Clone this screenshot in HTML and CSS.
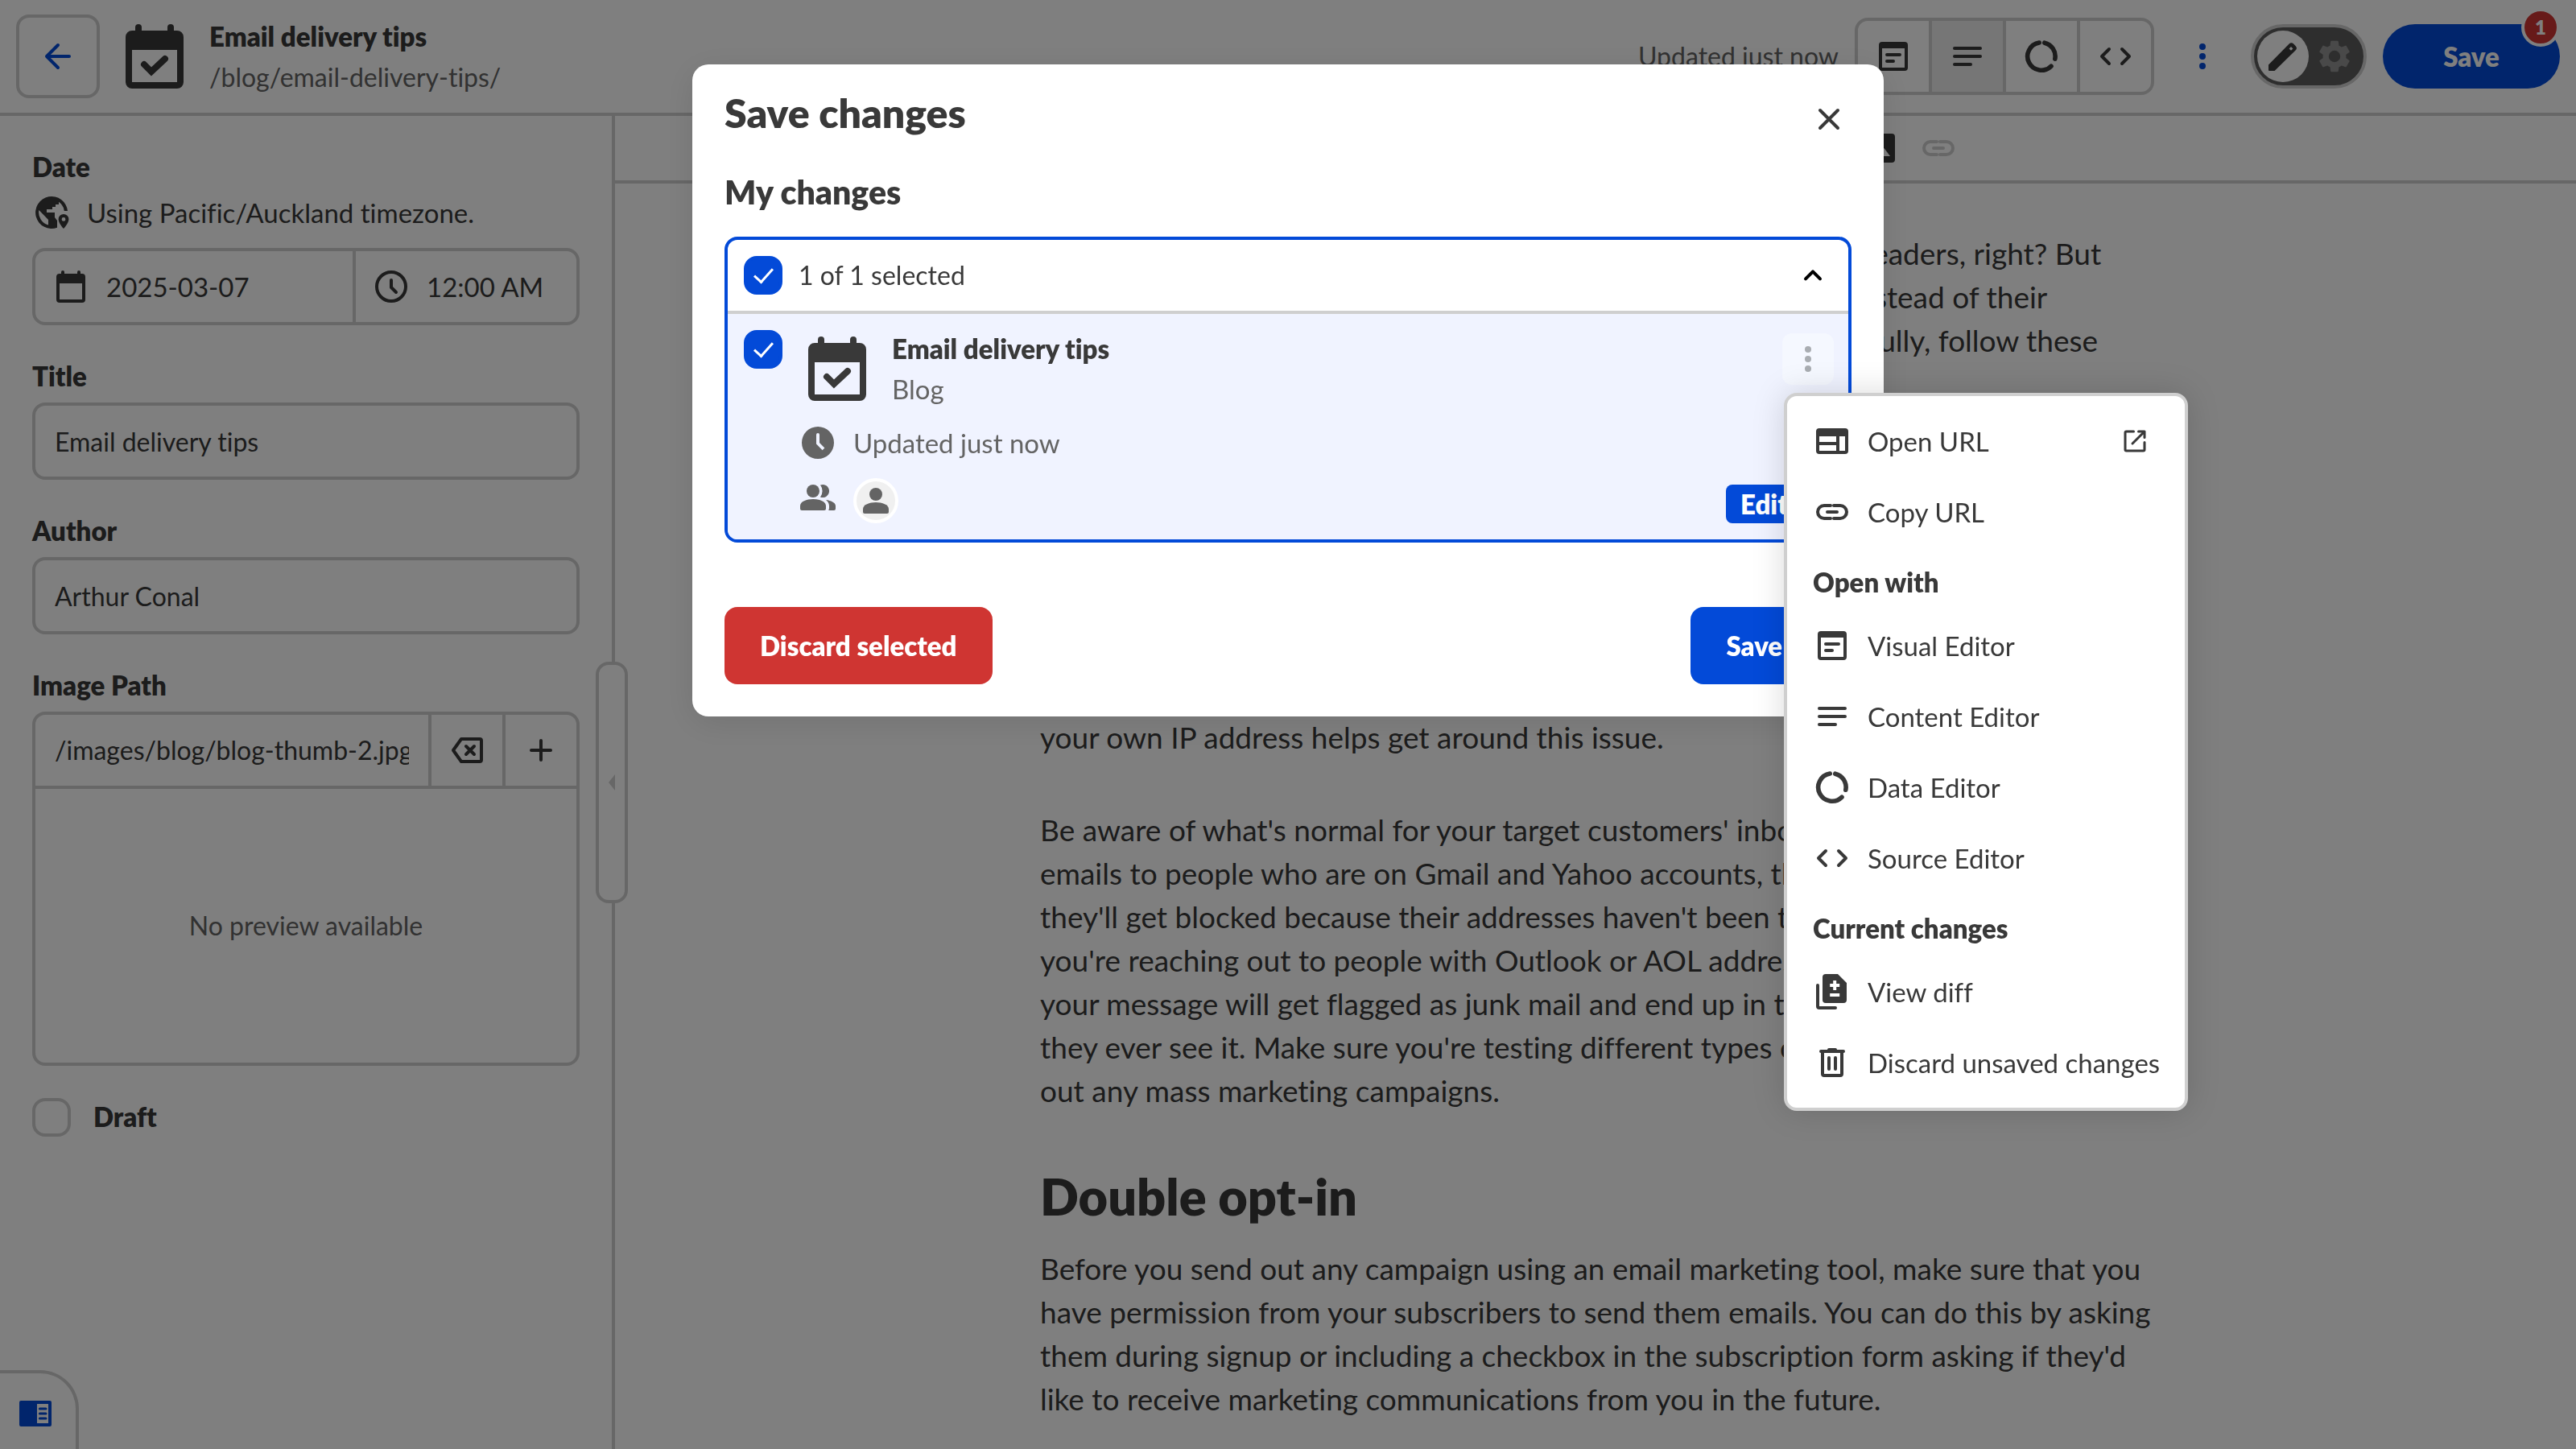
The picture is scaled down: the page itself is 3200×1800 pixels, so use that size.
FILE: index.html
```html
<!DOCTYPE html>
<html lang="en">
<head>
    <meta charset="UTF-8">
    <meta name="viewport" content="width=device-width, initial-scale=1.0">
    <title>Email delivery tips</title>
    <link rel="stylesheet" href="styles.css">
</head>
<body>
    <!-- Shared icons -->
    <svg class="sprite" aria-hidden="true">
        <symbol id="i-post" viewBox="0 0 72 80">
            <rect x="12" width="8" height="16" rx="4"/>
            <rect x="52" width="8" height="16" rx="4"/>
            <path fill-rule="evenodd" d="M8 8h56a8 8 0 0 1 8 8v56a8 8 0 0 1-8 8H8a8 8 0 0 1-8-8V16a8 8 0 0 1 8-8zM8 32v40h56V32z"/>
            <path d="M23 50l9 9 17-16" fill="none" stroke="currentColor" stroke-width="8" stroke-linecap="round" stroke-linejoin="miter"/>
        </symbol>
        <symbol id="i-visual" viewBox="0 0 24 24">
            <path fill-rule="evenodd" d="M5 3h14a2 2 0 0 1 2 2v14a2 2 0 0 1-2 2H5a2 2 0 0 1-2-2V5a2 2 0 0 1 2-2zM5 7v12h14V7z"/>
            <path class="line" d="M8 11h8M8 15h4"/>
        </symbol>
        <symbol id="i-content" viewBox="0 0 24 24"><path class="line" d="M4 7h16M4 12h16M4 17h10"/></symbol>
        <symbol id="i-data" viewBox="0 0 24 24"><path class="line thick" d="M10.6 3.5A8.6 8.6 0 1 0 18 18.1M13.9 3.6A8.6 8.6 0 0 1 20.4 13.6"/></symbol>
        <symbol id="i-code" viewBox="0 0 24 24"><path class="line" d="M8 7.5L3.5 12L8 16.5M16 7.5L20.5 12L16 16.5"/></symbol>
        <symbol id="i-link" viewBox="0 0 24 24"><path class="line" d="M11 16H7a4 4 0 0 1 0-8h4M13 8h4a4 4 0 0 1 0 8h-4M9 12h6"/></symbol>
        <symbol id="i-dots" viewBox="0 0 24 24"><circle cx="12" cy="6" r="2"/><circle cx="12" cy="12" r="2"/><circle cx="12" cy="18" r="2"/></symbol>
    </svg>

    <header class="topbar">
        <button class="back-btn" aria-label="Back">
            <svg class="icon" viewBox="0 0 24 24"><path class="line" d="M19 12H5M12 5l-7 7 7 7"/></svg>
        </button>
        <svg class="post-icon"><use href="#i-post"/></svg>
        <div class="page-name">
            <h1>Email delivery tips</h1>
            <span>/blog/email-delivery-tips/</span>
        </div>
        <span class="updated">Updated just now</span>
        <div class="editor-tabs">
            <button aria-label="Visual Editor"><svg class="icon"><use href="#i-visual"/></svg></button>
            <button class="active" aria-label="Content Editor"><svg class="icon"><use href="#i-content"/></svg></button>
            <button aria-label="Data Editor"><svg class="icon"><use href="#i-data"/></svg></button>
            <button aria-label="Source Editor"><svg class="icon"><use href="#i-code"/></svg></button>
        </div>
        <button class="more-btn" aria-label="More"><svg class="icon"><use href="#i-dots"/></svg></button>
        <button class="mode-toggle" aria-label="Editing mode">
            <span class="knob">
                <svg class="icon" viewBox="0 0 24 24"><path fill-rule="evenodd" d="M3 20.5v-3.2L15.8 4.3a2 2 0 0 1 2.8 0l1.2 1.2a2 2 0 0 1 0 2.8L6.8 21H3.5a.5.5 0 0 1-.5-.5zM17 6L15.8 7.2 17 8.4 18.2 7.2z"/></svg>
            </span>
            <span class="gear">
                <svg class="icon" viewBox="0 0 24 24"><path d="M19.14 12.94c.04-.3.06-.61.06-.94 0-.32-.02-.64-.07-.94l2.03-1.58a.49.49 0 0 0 .12-.61l-1.92-3.32a.488.488 0 0 0-.59-.22l-2.39.96c-.5-.38-1.03-.7-1.62-.94l-.36-2.54a.484.484 0 0 0-.48-.41h-3.84c-.24 0-.43.17-.47.41l-.36 2.54c-.59.24-1.13.57-1.62.94l-2.39-.96c-.22-.08-.47 0-.59.22L2.74 8.87c-.12.21-.08.47.12.61l2.03 1.58c-.05.3-.09.63-.09.94s.02.64.07.94l-2.03 1.58a.49.49 0 0 0-.12.61l1.92 3.32c.12.22.37.29.59.22l2.39-.96c.5.38 1.03.7 1.62.94l.36 2.54c.05.24.24.41.48.41h3.84c.24 0 .44-.17.47-.41l.36-2.54c.59-.24 1.13-.56 1.62-.94l2.39.96c.22.08.47 0 .59-.22l1.92-3.32c.12-.22.07-.47-.12-.61zM12 15.6A3.6 3.6 0 1 1 12 8.4a3.6 3.6 0 0 1 0 7.2z"/></svg>
            </span>
        </button>
        <button class="save-btn">Save<span class="count">1</span></button>
    </header>

    <div class="workspace">
        <aside class="sidebar">
            <div class="field">
                <label for="date">Date</label>
                <p class="timezone">
                    <svg class="icon" viewBox="0 0 24 24">
                        <path fill-rule="evenodd" d="M22 11A10 10 0 1 0 15.5 21.4V17L14 15v-3H9v-2h3.5V8.5h2V7h2V5.4A8 8 0 0 1 19.9 11zM4.2 10.5L10 16.5v3.2A8 8 0 0 1 4.2 10.5z"/>
                        <path fill-rule="evenodd" d="M19.5 13a3.2 3.2 0 0 0-3.2 3.2c0 2.3 3.2 5.8 3.2 5.8s3.2-3.5 3.2-5.8a3.2 3.2 0 0 0-3.2-3.2zM19.5 15a1.2 1.2 0 1 1 0 2.4 1.2 1.2 0 0 1 0-2.4z"/>
                    </svg>
                    Using Pacific/Auckland timezone.
                </p>
                <div class="box date-box">
                    <div class="date-part">
                        <svg class="icon" viewBox="0 0 24 24"><path fill-rule="evenodd" d="M6 3a1 1 0 0 1 2 0v1h8V3a1 1 0 0 1 2 0v1h1a2 2 0 0 1 2 2v14a2 2 0 0 1-2 2H5a2 2 0 0 1-2-2V6a2 2 0 0 1 2-2h1zM5 10v10h14V10z"/></svg>
                        <input id="date" type="text" value="2025-03-07">
                    </div>
                    <div class="time-part">
                        <svg class="icon" viewBox="0 0 24 24"><circle class="line" cx="12" cy="12" r="9"/><path class="line" d="M12 8v4.5l3 3"/></svg>
                        <input type="text" value="12:00 AM" aria-label="Time">
                    </div>
                </div>
            </div>
            <div class="field">
                <label for="title">Title</label>
                <input class="box text-input" id="title" type="text" value="Email delivery tips">
            </div>
            <div class="field">
                <label for="author">Author</label>
                <input class="box text-input" id="author" type="text" value="Arthur Conal">
            </div>
            <div class="field">
                <label for="image">Image Path</label>
                <div class="box image-box">
                    <div class="image-row">
                        <input id="image" type="text" value="/images/blog/blog-thumb-2.jpg">
                        <button aria-label="Clear"><svg class="icon" viewBox="0 0 24 24"><path class="line" d="M8.5 5H20a1 1 0 0 1 1 1v12a1 1 0 0 1-1 1H8.5L3.5 12zM11.500 9.500l5 5M16.500 9.500l-5 5"/></svg></button>
                        <button aria-label="Add"><svg class="icon" viewBox="0 0 24 24"><path class="line" d="M12 6v12M6 12h12"/></svg></button>
                    </div>
                    <div class="preview">No preview available</div>
                </div>
            </div>
            <div class="check-field">
                <input class="checkbox" id="draft" type="checkbox">
                <label for="draft">Draft</label>
            </div>
            <button class="collapse" aria-label="Collapse sidebar"><span></span></button>
            <button class="panel-btn" aria-label="Toggle panel">
                <svg class="icon" viewBox="0 0 24 24"><path fill-rule="evenodd" d="M3 4h18a1 1 0 0 1 1 1v14a1 1 0 0 1-1 1H3a1 1 0 0 1-1-1V5a1 1 0 0 1 1-1zM13 6v12h7V6z"/><path class="line thin" d="M14.7 9h3.8M14.7 12h3.8M14.7 15h3.8"/></svg>
            </button>
        </aside>

        <main class="editor">
            <div class="toolbar">
                <div class="toolbar-inner">
                    <button aria-label="Insert image"><svg class="icon" viewBox="0 0 24 24"><path fill-rule="evenodd" d="M5 3h14a2 2 0 0 1 2 2v14a2 2 0 0 1-2 2H5a2 2 0 0 1-2-2V5a2 2 0 0 1 2-2zM6 17h12l-3.75-5-3 4-2.25-3z"/></svg></button>
                    <button class="off" aria-label="Insert link"><svg class="icon"><use href="#i-link"/></svg></button>
                </div>
            </div>
            <article class="document">
                <p>
                    You want emails you send to actually reach the inboxes of your readers, right? But<br>
                    so many of the marketing messages end up in the spam folder instead of their<br>
                    inbox. To make sure that all your email campaigns arrive successfully, follow these<br>
                    email delivery tips.
                </p>
                <p>
                    Most email tools send from a shared address by default.<br>
                    That means your reputation depends on other senders.<br>
                    When one of them sends spam, the address is listed.<br>
                    Every other sender on it pays the price.<br>
                    The mail you send is then filtered too.<br>
                    It takes a long time to recover. Sending from<br>
                    your own IP address helps get around this issue.
                </p>
                <p>
                    Be aware of what's normal for your target customers' inboxes.<br>
                    emails to people who are on Gmail and Yahoo accounts, there<br>
                    they'll get blocked because their addresses haven't been tested.<br>
                    you're reaching out to people with Outlook or AOL addresses,<br>
                    your message will get flagged as junk mail and end up in there<br>
                    they ever see it. Make sure you're testing different types of<br>
                    out any mass marketing campaigns.
                </p>
                <h2>Double opt-in</h2>
                <p>
                    Before you send out any campaign using an email marketing tool, make sure that you<br>
                    have permission from your subscribers to send them emails. You can do this by asking<br>
                    them during signup or including a checkbox in the subscription form asking if they'd<br>
                    like to receive marketing communications from you in the future.
                </p>
            </article>
        </main>
    </div>

    <div class="overlay">
        <section class="modal" role="dialog" aria-modal="true" aria-labelledby="modal-title">
            <div class="modal-head">
                <h2 id="modal-title">Save changes</h2>
                <button class="close-btn" aria-label="Close"><svg class="icon" viewBox="0 0 24 24"><path class="line" d="M6.5 6.5l11 11M17.5 6.5l-11 11"/></svg></button>
            </div>
            <h3>My changes</h3>
            <div class="changes">
                <div class="changes-head">
                    <input class="checkbox" id="all" type="checkbox" checked>
                    <label for="all">1 of 1 selected</label>
                    <button class="chevron" aria-label="Collapse list"><svg class="icon" viewBox="0 0 24 24"><path class="line" d="M7.5 14.2L12 9.7l4.5 4.5"/></svg></button>
                </div>
                <div class="change">
                    <input class="checkbox" type="checkbox" checked aria-label="Email delivery tips">
                    <div class="change-body">
                        <div class="change-title">
                            <svg class="post-icon"><use href="#i-post"/></svg>
                            <div>
                                <strong>Email delivery tips</strong>
                                <span>Blog</span>
                            </div>
                        </div>
                        <div class="change-row">
                            <svg class="icon" viewBox="0 0 24 24"><path fill-rule="evenodd" d="M12 2a10 10 0 1 0 0 20 10 10 0 0 0 0-20zM11 7a1 1 0 0 1 2 0v5l3.2 3.2-1.4 1.4L11 12.8z"/></svg>
                            Updated just now
                        </div>
                        <div class="change-row people">
                            <svg class="icon" viewBox="0 0 24 24"><circle cx="9" cy="8" r="4"/><path d="M1 17.2C1 14.5 5 13 9 13s8 1.5 8 4.2V19a1 1 0 0 1-1 1H2a1 1 0 0 1-1-1zM13.5 11.7a6 6 0 0 0 0-7.4A4 4 0 1 1 13.5 11.7zM18.6 20c.3-.6.4-1 .4-1.5v-1.3c0-1.5-.8-2.8-2-3.7 3 .4 6 1.6 6 3.7V19a1 1 0 0 1-1 1z"/></svg>
                            <span class="avatar"><svg class="icon" viewBox="0 0 24 24"><circle cx="12" cy="8" r="4"/><path d="M4 17.2C4 14.5 8 13 12 13s8 1.5 8 4.2V19a1 1 0 0 1-1 1H5a1 1 0 0 1-1-1z"/></svg></span>
                            <span class="tag">Edited</span>
                        </div>
                    </div>
                    <div class="change-menu">
                        <button class="kebab" aria-label="Change options"><svg class="icon"><use href="#i-dots"/></svg></button>
                        <nav class="menu">
                            <a href="#">
                                <svg class="icon" viewBox="0 0 24 24"><path fill-rule="evenodd" d="M4 4h16a2 2 0 0 1 2 2v12a2 2 0 0 1-2 2H4a2 2 0 0 1-2-2V6a2 2 0 0 1 2-2zM4 9v3.5h10.5V9zM4 14.5V18h10.5v-3.5zM16.5 9v9H20V9z"/></svg>
                                Open URL
                                <svg class="icon external" viewBox="0 0 24 24"><path class="line" d="M11 4H5a1 1 0 0 0-1 1v14a1 1 0 0 0 1 1h14a1 1 0 0 0 1-1v-6M15 4h5v5M20 4L10 14"/></svg>
                            </a>
                            <button><svg class="icon"><use href="#i-link"/></svg>Copy URL</button>
                            <h4>Open with</h4>
                            <a href="#"><svg class="icon"><use href="#i-visual"/></svg>Visual Editor</a>
                            <a href="#"><svg class="icon"><use href="#i-content"/></svg>Content Editor</a>
                            <a href="#"><svg class="icon"><use href="#i-data"/></svg>Data Editor</a>
                            <a href="#"><svg class="icon"><use href="#i-code"/></svg>Source Editor</a>
                            <h4>Current changes</h4>
                            <button>
                                <svg class="icon" viewBox="0 0 24 24"><path fill-rule="evenodd" d="M8 1h7.5L21 6.5V17a2 2 0 0 1-2 2H8a2 2 0 0 1-2-2V3a2 2 0 0 1 2-2zM12.6 5v2h-2v2h2v2h2V9h2V7h-2V5zM10.6 13v2h6v-2z"/><path class="line" d="M3 8v13a1 1 0 0 0 1 1h10"/></svg>
                                View diff
                            </button>
                            <button>
                                <svg class="icon" viewBox="0 0 24 24"><path class="line" d="M6 5v14a1 1 0 0 0 1 1h10a1 1 0 0 0 1-1V5M5 5h14M10 4h4M10 9v7M14 9v7"/></svg>
                                Discard unsaved changes
                            </button>
                        </nav>
                    </div>
                </div>
            </div>
            <div class="modal-actions">
                <button class="btn danger">Discard selected</button>
                <button class="btn primary">Save all</button>
            </div>
        </section>
    </div>
</body>
</html>
```
FILE: styles.css
```css
* {
    margin: 0;
    padding: 0;
    box-sizing: border-box;
}
:root {
    --text: #393939;
    --muted: #646464;
    --border: #cfcfcf;
    --blue: #034ad8;
    --red: #cf3532;
}
body {
    display: flex;
    flex-direction: column;
    height: 100vh;
    overflow: hidden;
    background: #fff;
    color: var(--text);
    font-family: Lato, "Liberation Sans", sans-serif;
    font-size: 33px;
    line-height: 48px;
    font-variant-ligatures: none;
}
h1, h2, h3, h4, strong {
    font-weight: 800;
}
button, input {
    font: inherit;
    color: inherit;
    border: none;
    background: none;
    outline: none;
}
input {
    font-size: 32px;
}
button {
    display: flex;
    align-items: center;
    justify-content: center;
    cursor: pointer;
}
a {
    color: inherit;
    text-decoration: none;
}

/* Icons */
.sprite {
    display: none;
}
.icon {
    width: 48px;
    height: 48px;
    flex-shrink: 0;
    fill: currentColor;
}
.line {
    fill: none;
    stroke: currentColor;
    stroke-width: 2;
    stroke-linecap: round;
    stroke-linejoin: round;
}
.thick {
    stroke-width: 2.8;
}
.thin {
    stroke-width: 1.5;
}
.post-icon {
    width: 72px;
    height: 80px;
    flex-shrink: 0;
    fill: currentColor;
}

/* Top bar */
.topbar {
    display: flex;
    align-items: center;
    flex-shrink: 0;
    height: 144px;
    padding: 0 20px;
    border-bottom: 4px solid var(--border);
}
.back-btn {
    width: 104px;
    height: 104px;
    margin-right: 32px;
    border: 4px solid var(--border);
    border-radius: 16px;
    color: var(--blue);
}
.page-name {
    margin-left: 32px;
    line-height: 50px;
}
.page-name h1 {
    font-size: 33px;
}
.page-name span {
    color: var(--muted);
    font-size: 32px;
}
.updated {
    margin-left: auto;
    margin-right: 20px;
    color: var(--muted);
    font-size: 32px;
}
.editor-tabs {
    display: flex;
    border: 4px solid var(--border);
    border-radius: 16px;
    overflow: hidden;
}
.editor-tabs button {
    width: 88px;
    height: 88px;
    box-sizing: content-box;
}
.editor-tabs button + button {
    border-left: 4px solid var(--border);
}
.editor-tabs .active {
    background: #ececec;
}
.more-btn {
    width: 120px;
    height: 80px;
    color: var(--blue);
}
.mode-toggle {
    justify-content: flex-start;
    width: 144px;
    height: 80px;
    margin-right: 20px;
    padding: 4px;
    border: 4px solid var(--border);
    border-radius: 40px;
    background: #5c5c5c;
}
.knob, .gear {
    display: flex;
    align-items: center;
    justify-content: center;
    width: 64px;
    height: 64px;
    border-radius: 50%;
}
.knob {
    background: #fff;
}
.gear {
    color: #929292;
}
.save-btn {
    position: relative;
    width: 220px;
    height: 80px;
    border-radius: 40px;
    background: var(--blue);
    color: #fff;
    font-weight: 800;
}
.count {
    position: absolute;
    top: -20px;
    right: 0;
    width: 48px;
    height: 48px;
    border: 4px solid #fff;
    border-radius: 50%;
    background: var(--red);
    font-size: 24px;
    line-height: 40px;
}

/* Sidebar */
.workspace {
    display: flex;
    flex: 1;
    min-height: 0;
}
.sidebar {
    position: relative;
    flex-shrink: 0;
    width: 764px;
    padding: 40px;
    border-right: 4px solid var(--border);
}
.field {
    display: flex;
    flex-direction: column;
    gap: 10px;
    margin-bottom: 40px;
}
.field label, .check-field label {
    font-weight: 800;
    line-height: 46px;
}
.timezone {
    display: flex;
    gap: 20px;
    margin-bottom: 10px;
}
.box {
    border: 4px solid var(--border);
    border-radius: 16px;
}
.text-input {
    height: 96px;
    padding: 0 24px;
}
.date-box {
    display: flex;
    height: 96px;
}
.date-part, .time-part {
    display: flex;
    align-items: center;
    gap: 20px;
    padding-left: 20px;
}
.date-part {
    flex: 1;
}
.time-part {
    width: 278px;
    border-left: 4px solid var(--border);
}
.date-box input {
    width: 100%;
    min-width: 0;
    font-size: 33px;
}
.image-row {
    display: flex;
    height: 92px;
    border-bottom: 4px solid var(--border);
}
.image-row input {
    flex: 1;
    min-width: 0;
    margin: 0 24px;
}
.image-row button {
    width: 92px;
    border-left: 4px solid var(--border);
}
.preview {
    display: flex;
    align-items: center;
    justify-content: center;
    height: 340px;
    color: var(--muted);
    font-size: 32px;
}
.check-field {
    display: flex;
    gap: 28px;
}
.checkbox {
    display: flex;
    flex-shrink: 0;
    width: 48px;
    height: 48px;
    appearance: none;
    border: 4px solid var(--border);
    border-radius: 16px;
}
.checkbox:checked {
    border-color: var(--blue);
    background: var(--blue);
}
.checkbox:checked::before {
    content: "";
    width: 10px;
    height: 20px;
    margin: 6px auto auto;
    border: solid #fff;
    border-width: 0 3px 3px 0;
    transform: rotate(42deg);
}
.collapse {
    position: absolute;
    top: calc(50% - 150px);
    right: -20px;
    width: 40px;
    height: 300px;
    border: 4px solid var(--border);
    border-radius: 16px;
    background: #fff;
}
.collapse span {
    border: 10px solid transparent;
    border-right: 8px solid var(--border);
    border-left: none;
}
.panel-btn {
    position: absolute;
    left: 0;
    bottom: 0;
    width: 98px;
    height: 98px;
    padding: 6px 6px 0 0;
    border: 4px solid var(--border);
    border-left: none;
    border-bottom: none;
    border-radius: 0 48px 0 0;
    color: var(--blue);
}

/* Editor */
.editor {
    flex: 1;
    min-width: 0;
}
.toolbar {
    border-bottom: 4px solid var(--border);
}
.toolbar-inner {
    display: flex;
    align-items: center;
    justify-content: flex-end;
    gap: 24px;
    max-width: 1380px;
    height: 80px;
    margin: 0 auto;
    padding-right: 240px;
}
.off {
    color: var(--border);
}
.document {
    max-width: 1380px;
    margin: 0 auto;
    padding-top: 60px;
    font-size: 37px;
    line-height: 54px;
    white-space: nowrap;
}
.document p {
    margin-bottom: 61px;
}
.document h2 {
    margin-bottom: 20px;
    font-size: 63px;
    line-height: 86px;
}

/* Save dialog */
.overlay {
    position: fixed;
    inset: 0;
    padding-top: 80px;
    background: rgba(0, 0, 0, 0.5);
}
.modal {
    max-width: 1480px;
    margin: 0 auto;
    padding: 40px;
    border-radius: 20px;
    background: #fff;
    box-shadow: 0 8px 40px rgba(0, 0, 0, 0.1);
}
.modal-head {
    display: flex;
    justify-content: space-between;
    height: 88px;
}
.modal-head h2 {
    font-size: 50px;
    line-height: 40px;
}
.close-btn {
    width: 56px;
    height: 56px;
}
.modal h3 {
    margin-bottom: 24px;
    font-size: 41px;
    line-height: 62px;
}
.changes {
    border: 4px solid var(--blue);
    border-radius: 16px;
}
.changes-head {
    display: flex;
    align-items: center;
    gap: 20px;
    height: 92px;
    padding: 0 20px;
    border-bottom: 4px solid var(--border);
}
.changes-head label {
    font-size: 32px;
}
.chevron {
    margin-left: auto;
    color: #000;
}
.change {
    position: relative;
    display: flex;
    gap: 20px;
    padding: 20px;
    border-radius: 0 0 12px 12px;
    background: #f0f3ff;
}
.change-body {
    flex: 1;
}
.change-title {
    display: flex;
    align-items: center;
    gap: 32px;
    height: 96px;
    padding-left: 12px;
    margin-bottom: 20px;
    line-height: 50px;
}
.change-title strong, .change-title span {
    display: block;
}
.change-title span {
    color: var(--muted);
}
.change-row {
    display: flex;
    align-items: center;
    gap: 20px;
    color: var(--muted);
}
.people {
    align-items: flex-start;
    margin-top: 20px;
}
.avatar {
    display: flex;
    align-items: center;
    justify-content: center;
    width: 56px;
    height: 56px;
    border: 4px solid #fff;
    border-radius: 50%;
    background: #f0f0f0;
}
.tag {
    align-self: flex-end;
    min-width: 132px;
    margin-left: auto;
    padding: 0 18px;
    border-radius: 8px;
    background: var(--blue);
    color: #fff;
    font-weight: 800;
}
.modal-actions {
    display: flex;
    justify-content: space-between;
    margin-top: 80px;
}
.btn {
    height: 96px;
    padding: 0 44px;
    border-radius: 16px;
    color: #fff;
    font-weight: 800;
}
.danger {
    background: var(--red);
}
.primary {
    background: var(--blue);
}

/* Options menu */
.change-menu {
    position: absolute;
    top: 24px;
    right: 18px;
}
.kebab {
    width: 64px;
    height: 64px;
    border-radius: 12px;
    background: #f5f8ff;
    color: #a9adb2;
}
.menu {
    position: absolute;
    top: 74px;
    left: 2px;
    width: 502px;
    padding: 12px 0;
    border: 4px solid var(--border);
    border-radius: 16px;
    background: #fff;
    box-shadow: 0 0 40px rgba(0, 0, 0, 0.15);
}
.menu a, .menu button {
    display: flex;
    align-items: center;
    justify-content: flex-start;
    gap: 20px;
    width: 100%;
    height: 88px;
    padding: 0 32px;
    white-space: nowrap;
}
.menu h4 {
    padding: 19px 32px 11px;
    font-size: 33px;
}
.external {
    width: 36px;
    height: 36px;
    margin-left: auto;
    margin-right: 12px;
}
```
